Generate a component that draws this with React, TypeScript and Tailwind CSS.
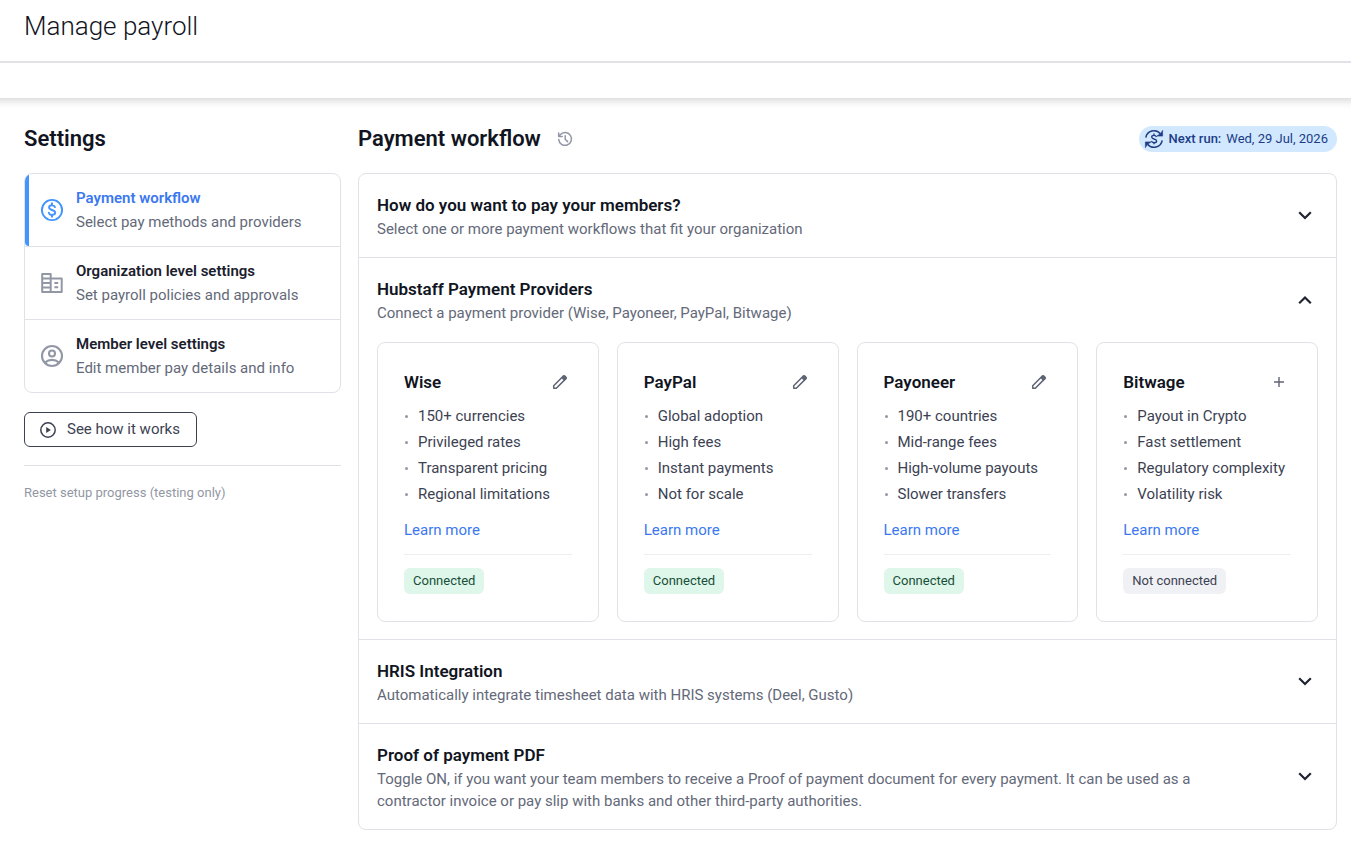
import React, { useState } from 'react';

interface NavItem {
  id: string;
  title: string;
  text: string;
  icon: React.ReactNode;
}

interface Provider {
  name: string;
  features: string[];
  connected: boolean;
}

const PaidIcon = () => (
  <svg viewBox="0 0 24 24" className="h-6 w-6" fill="none" stroke="currentColor" strokeWidth="1.9">
    <circle cx="12" cy="12" r="10.1" />
    <path strokeLinecap="round" d="M12 5.2v1.9M12 16.900v1.900M15 9.100c-.5-1.300-1.600-1.900-3-1.900-1.700 0-2.900.9-2.900 2.300 0 1.500 1.300 2 2.900 2.500 1.800.6 3.200 1.100 3.200 2.600 0 1.500-1.300 2.300-3.100 2.300-1.600 0-2.800-.7-3.300-2.200" />
  </svg>
);

const BuildingIcon = () => (
  <svg viewBox="0 0 24 24" className="h-6 w-6" fill="none" stroke="currentColor" strokeWidth="2" strokeLinejoin="round">
    <path d="M2.200 3.100h8.500v17.800H2.200zM10.700 7.500h11v13.400h-11" />
    <path d="M2.200 7.500h8.500M2.200 12h8.500M2.200 16.500h8.500M14.400 12h3.800M14.400 16.300h3.800" />
  </svg>
);

const MemberIcon = () => (
  <svg viewBox="0 0 24 24" className="h-6 w-6" fill="none" stroke="currentColor" strokeWidth="2.100">
    <circle cx="12" cy="12" r="10" />
    <circle cx="12" cy="9.500" r="3" />
    <path d="M5 18.600c2-1.800 4.400-2.700 7-2.700s5 .9 7 2.700" />
  </svg>
);

const PlayIcon = () => (
  <svg viewBox="0 0 18 18" className="h-[18px] w-[18px]" fill="none" stroke="currentColor" strokeWidth="1.500">
    <circle cx="9" cy="9" r="7.200" />
    <path d="M7.200 6.100v5.800L11.900 9z" fill="currentColor" stroke="none" />
  </svg>
);

const HistoryIcon = () => (
  <svg viewBox="0 0 18 18" className="h-[18px] w-[18px]" fill="none" stroke="currentColor" strokeWidth="1.500" strokeLinecap="round" strokeLinejoin="round">
    <path d="M2.700 9.400a6.400 6.400 0 1 0 1.500-4.600L2.900 6.200" />
    <path d="M2.700 2.900v3.500h3.500M9.200 5.700v3.500l2.400 2.400" />
  </svg>
);

const RunIcon = () => (
  <svg viewBox="0 0 20 20" className="h-5 w-5" fill="none" stroke="currentColor" strokeWidth="1.500">
    <path d="M1.800 8.700A8.300 8.300 0 0 1 16.400 4.800M18.200 11.300A8.300 8.300 0 0 1 3.600 15.200" />
    <path d="M18.600 1.400v5.700h-5.700l2.300-1.500 1.900-1.900zM1.400 18.600v-5.700h5.700l-2.300 1.500-1.900 1.900z" fill="currentColor" strokeWidth="0.600" />
    <path strokeWidth="1.400" d="M10 4.600v1.600M10 13.700v1.600M12.500 8c-.4-1-1.300-1.600-2.500-1.600-1.300 0-2.300.6-2.300 1.700 0 1.200 1 1.500 2.300 1.900 1.500.4 2.600.8 2.600 2 0 1.100-1 1.800-2.500 1.800-1.300 0-2.300-.6-2.700-1.700" />
  </svg>
);

const PencilIcon = () => (
  <svg viewBox="0 0 18 18" className="h-[18px] w-[18px]" fill="none" stroke="currentColor" strokeWidth="1.500" strokeLinejoin="round">
    <path d="M2.700 15.300v-2.600l9.900-9.900 2.600 2.600-9.900 9.900z" />
    <path d="M10.300 4.900l2.500-2.500q.7-.6 1.400 0l1.400 1.400q.6.7 0 1.400l-2.500 2.500z" fill="currentColor" stroke="none" />
  </svg>
);

const PlusIcon = () => (
  <svg viewBox="0 0 18 18" className="h-[18px] w-[18px]" fill="none" stroke="currentColor" strokeWidth="1.400">
    <path d="M9 4v10M4 9h10" />
  </svg>
);

const Chevron = ({ open }: { open: boolean }) => (
  <svg viewBox="0 0 24 24" className="h-6 w-6 shrink-0 text-[#1f2430]" fill="none" stroke="currentColor" strokeWidth="2.200">
    <path d={open ? 'M6.200 15.300 12 9.500l5.800 5.800' : 'M6.200 8.200 12 14l5.800-5.800'} />
  </svg>
);

const navItems: NavItem[] = [
  { id: 'workflow', title: 'Payment workflow', text: 'Select pay methods and providers', icon: <PaidIcon /> },
  { id: 'organization', title: 'Organization level settings', text: 'Set payroll policies and approvals', icon: <BuildingIcon /> },
  { id: 'member', title: 'Member level settings', text: 'Edit member pay details and info', icon: <MemberIcon /> },
];

const providers: Provider[] = [
  { name: 'Wise', features: ['150+ currencies', 'Privileged rates', 'Transparent pricing', 'Regional limitations'], connected: true },
  { name: 'PayPal', features: ['Global adoption', 'High fees', 'Instant payments', 'Not for scale'], connected: true },
  { name: 'Payoneer', features: ['190+ countries', 'Mid-range fees', 'High-volume payouts', 'Slower transfers'], connected: true },
  { name: 'Bitwage', features: ['Payout in Crypto', 'Fast settlement', 'Regulatory complexity', 'Volatility risk'], connected: false },
];

const ProviderCard = ({ provider }: { provider: Provider }) => (
  <div className="rounded-lg border border-[#e1e2e8] px-[26px] pt-[26px] pb-[27px]">
    <div className="flex items-center justify-between">
      <h4 className="text-[17px] leading-[26px] font-semibold text-[#111522]">{provider.name}</h4>
      <button
        type="button"
        aria-label={provider.connected ? `Edit ${provider.name}` : `Add ${provider.name}`}
        className="flex h-6 w-6 items-center justify-center text-[#5f6475]"
      >
        {provider.connected ? <PencilIcon /> : <PlusIcon />}
      </button>
    </div>
    <ul className="mt-2">
      {provider.features.map((feature) => (
        <li key={feature} className="flex items-center gap-2.5 text-[15px] leading-[26px] whitespace-nowrap text-[#3c4252]">
          <span className="ml-px h-[3px] w-[3px] rounded-full bg-[#9297a5]" />
          {feature}
        </li>
      ))}
    </ul>
    <a href="#learn-more" className="mt-2.5 block text-[15px] leading-[26px] text-[#3b78f0]">
      Learn more
    </a>
    <hr className="mt-[11px] border-[#edeef1]" />
    <span
      className={`mt-[13px] inline-block rounded-md px-[9px] align-top text-[13px] leading-[26px] ${
        provider.connected ? 'bg-[#dff6eb] text-[#174f36]' : 'bg-[#f0f1f4] text-[#3c4252]'
      }`}
    >
      {provider.connected ? 'Connected' : 'Not connected'}
    </span>
  </div>
);

interface SectionProps {
  title: string;
  text: string;
  open: boolean;
  onToggle: () => void;
  children?: React.ReactNode;
}

const Section = ({ title, text, open, onToggle, children }: SectionProps) => (
  <section className="px-[18px] pt-[18px] pb-[17px]">
    <button type="button" onClick={onToggle} aria-expanded={open} className="flex w-full items-center justify-between gap-16 pr-px text-left">
      <span className="block">
        <span className="block text-[17px] leading-[26px] font-semibold text-[#111522]">{title}</span>
        <span className="block text-[15px] leading-[22px] text-[#646979]">{text}</span>
      </span>
      <Chevron open={open} />
    </button>
    {open && children}
  </section>
);

export default function App() {
  const [active, setActive] = useState('workflow');
  const [openSection, setOpenSection] = useState('providers');

  const toggle = (id: string) => setOpenSection(openSection === id ? '' : id);

  return (
    <div className="min-h-screen overflow-x-hidden bg-white font-['Roboto',sans-serif]">
      <header className="bg-white shadow-[0_-8px_9px_10px_rgba(0,0,0,0.18)]">
        <div className="border-b-2 border-[#e1e2e8] px-6 pt-2 pb-[17px]">
          <h1 className="text-[26px] leading-9 font-light text-[#111522]">Manage payroll</h1>
        </div>
        <div className="h-[35px]" />
      </header>

      <main className="flex gap-[17px] pt-[23px] pr-3.5 pb-[18px] pl-6">
        <aside className="w-[317px] shrink-0">
          <h2 className="text-[22px] leading-9 font-semibold text-[#111522]">Settings</h2>
          <nav className="mt-4 divide-y divide-[#e1e2e8] overflow-hidden rounded-lg border border-[#e1e2e8]">
            {navItems.map((item) => (
              <button
                key={item.id}
                type="button"
                onClick={() => setActive(item.id)}
                className="relative flex w-full items-center gap-3 py-3 pr-3 pl-[15px] text-left"
              >
                {active === item.id && <span className="absolute inset-y-0 left-0 w-1 rounded-l-md bg-[#4294ff]" />}
                <span className={active === item.id ? 'text-[#4294ff]' : 'text-[#9297a5]'}>{item.icon}</span>
                <span className="block text-[15px] leading-6">
                  <span className={`block font-semibold ${active === item.id ? 'text-[#3b78f0]' : 'text-[#1b202d]'}`}>
                    {item.title}
                  </span>
                  <span className="block text-[#646979]">{item.text}</span>
                </span>
              </button>
            ))}
          </nav>
          <button
            type="button"
            className="mt-[19px] flex h-[35px] items-center gap-2.5 rounded-md border border-[#3c4252] pr-4 pl-3.5 text-[15px] text-[#3c4252]"
          >
            <PlayIcon />
            See how it works
          </button>
          <hr className="mt-[18px] border-[#e1e2e8]" />
          <button type="button" className="mt-[17px] block text-[13px] leading-5 text-[#9297a5]">
            Reset setup progress (testing only)
          </button>
        </aside>

        <div className="min-w-0 flex-1">
          <div className="flex h-9 items-center justify-between">
            <div className="flex items-center gap-[15px]">
              <h2 className="text-[22px] leading-9 font-semibold text-[#111522]">Payment workflow</h2>
              <button type="button" aria-label="History" className="text-[#9297a5]">
                <HistoryIcon />
              </button>
            </div>
            <div className="flex h-[26px] items-center gap-[5px] rounded-full bg-[#d1e8ff] pr-[9px] pl-[5px] text-[13px] text-[#203c87]">
              <RunIcon />
              <span className="font-medium">Next run:</span>
              <span>Wed, 29 Jul, 2026</span>
            </div>
          </div>

          <div className="mt-4 divide-y divide-[#e1e2e8] rounded-lg border border-[#e1e2e8]">
            <Section
              title="How do you want to pay your members?"
              text="Select one or more payment workflows that fit your organization"
              open={openSection === 'workflows'}
              onToggle={() => toggle('workflows')}
            />
            <Section
              title="Hubstaff Payment Providers"
              text="Connect a payment provider (Wise, Payoneer, PayPal, Bitwage)"
              open={openSection === 'providers'}
              onToggle={() => toggle('providers')}
            >
              <div className="mt-[18px] grid grid-cols-4 gap-[18px]">
                {providers.map((provider) => (
                  <ProviderCard key={provider.name} provider={provider} />
                ))}
              </div>
            </Section>
            <Section
              title="HRIS Integration"
              text="Automatically integrate timesheet data with HRIS systems (Deel, Gusto)"
              open={openSection === 'hris'}
              onToggle={() => toggle('hris')}
            />
            <Section
              title="Proof of payment PDF"
              text="Toggle ON, if you want your team members to receive a Proof of payment document for every payment. It can be used as a contractor invoice or pay slip with banks and other third-party authorities."
              open={openSection === 'proof'}
              onToggle={() => toggle('proof')}
            />
          </div>
        </div>
      </main>
    </div>
  );
}
